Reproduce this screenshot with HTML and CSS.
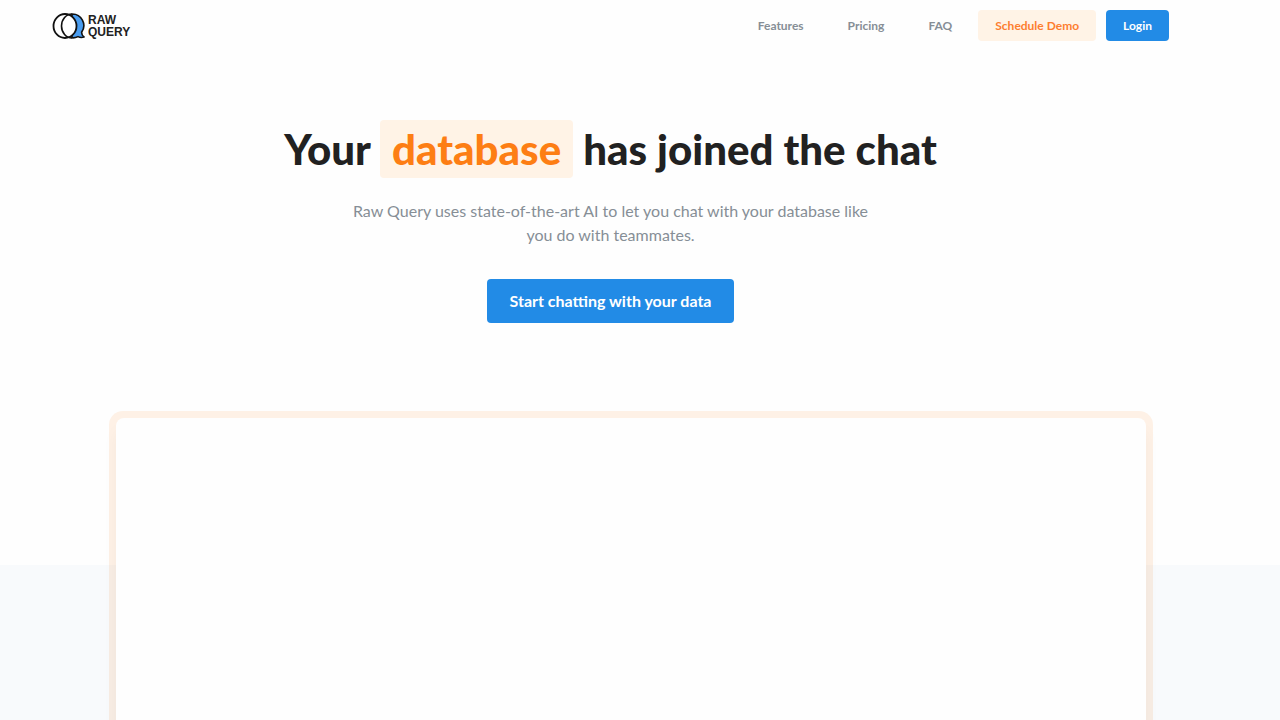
FILE: index.html
```html
<!DOCTYPE html>
<html lang="en">
<head>
  <meta charset="UTF-8">
  <meta name="viewport" content="width=device-width, initial-scale=1.0">
  <title>Raw Query</title>
  <link rel="stylesheet" href="styles.css">
</head>
<body>
  <!-- Header -->
  <header class="header">
    <a class="logo" href="#">
      <svg class="logo-mark" viewBox="0 0 33 28" aria-hidden="true">
        <path d="M20 2a11.500 11.500 0 0 1 9.600 18.200c0 2 .6 3.400 2.400 4.800-2.400.8-4.400.4-6-.4a11.500 11.500 0 0 1-6 1.200z" fill="#4a9df0" stroke="#111" stroke-width="1.600" stroke-linejoin="round"/>
        <ellipse cx="13" cy="14" rx="11.500" ry="12" fill="#fff"/>
        <path d="M20 2a10.500 12 0 0 0 0 24" fill="none" stroke="#111" stroke-width="1.600"/>
        <ellipse cx="13" cy="14" rx="11.500" ry="12" fill="none" stroke="#111" stroke-width="1.800"/>
      </svg>
      <span class="logo-text">RAW<br>QUERY</span>
    </a>
    <nav class="nav">
      <a class="nav-link" href="#features">Features</a>
      <a class="nav-link" href="#pricing">Pricing</a>
      <a class="nav-link" href="#faq">FAQ</a>
      <div class="nav-actions">
        <button class="btn btn-light" type="button">Schedule Demo</button>
        <button class="btn btn-primary" type="button">Login</button>
      </div>
    </nav>
  </header>

  <main>
    <!-- Hero -->
    <section class="hero">
      <h1 class="hero-title">Your <span class="highlight">database</span> has joined the chat</h1>
      <p class="hero-text">Raw Query uses state-of-the-art AI to let you chat with your database like you do with teammates.</p>
      <button class="btn btn-primary btn-large" type="button">Start chatting with your data</button>
    </section>

    <!-- Product demo -->
    <section class="demo">
      <div class="demo-frame">
        <div class="demo-screen"></div>
      </div>
    </section>
  </main>
</body>
</html>
```

FILE: styles.css
```css
* {
  box-sizing: border-box;
}

body {
  margin: 0;
  background: #fefefe;
  color: #212529;
  font-family: Lato, sans-serif;
}

/* Header */
.header {
  display: flex;
  justify-content: space-between;
  align-items: center;
  height: 51px;
  padding: 0 111px 0 52px;
}

.logo {
  display: flex;
  align-items: center;
  gap: 3px;
  color: #212121;
  text-decoration: none;
}

.logo-mark {
  width: 33px;
  height: 28px;
}

.logo-text {
  font: bold 12px/12px "Liberation Sans", Arial, sans-serif;
}

.nav {
  display: flex;
  align-items: center;
  gap: 44px;
}

.nav-link {
  color: #868e96;
  font-size: 12px;
  font-weight: 700;
  text-decoration: none;
}

.nav-actions {
  display: flex;
  gap: 10px;
  margin-left: -18px;
}

/* Buttons */
.btn {
  height: 31px;
  padding: 0 17px;
  border: none;
  border-radius: 4px;
  font-family: inherit;
  font-size: 12px;
  font-weight: 700;
  cursor: pointer;
}

.btn-light {
  background: #fff3e6;
  color: #fd7e30;
}

.btn-primary {
  background: #228be6;
  color: #fff;
}

.btn-large {
  height: 44px;
  padding: 0 23px 2px;
  font-size: 16px;
}

/* Hero */
.hero {
  display: flex;
  flex-direction: column;
  align-items: center;
  padding: 68px 59px 88px 0;
  text-align: center;
}

.hero-title {
  margin: 0;
  color: #212121;
  font-size: 42px;
  font-weight: 900;
  line-height: 60px;
}

.highlight {
  padding: 4px 12px;
  border-radius: 4px;
  background: #fff3e6;
  color: #fd7e14;
}

.hero-text {
  max-width: 520px;
  margin: 20px 0 32px;
  color: #868e96;
  font-size: 16px;
  line-height: 24px;
}

/* Product demo, its grey band starts part way down the frame */
.demo {
  padding: 0 127px 80px 109px;
  background: linear-gradient(transparent 154px, #f8fafc 154px);
}

.demo-frame {
  padding: 7px;
  border-radius: 14px;
  background: rgba(253, 126, 20, 0.1);
}

.demo-screen {
  aspect-ratio: 16 / 9;
  border-radius: 8px;
  background: #fefefe;
  box-shadow: 0 12px 16px rgba(0, 0, 0, 0.04);
}
```
